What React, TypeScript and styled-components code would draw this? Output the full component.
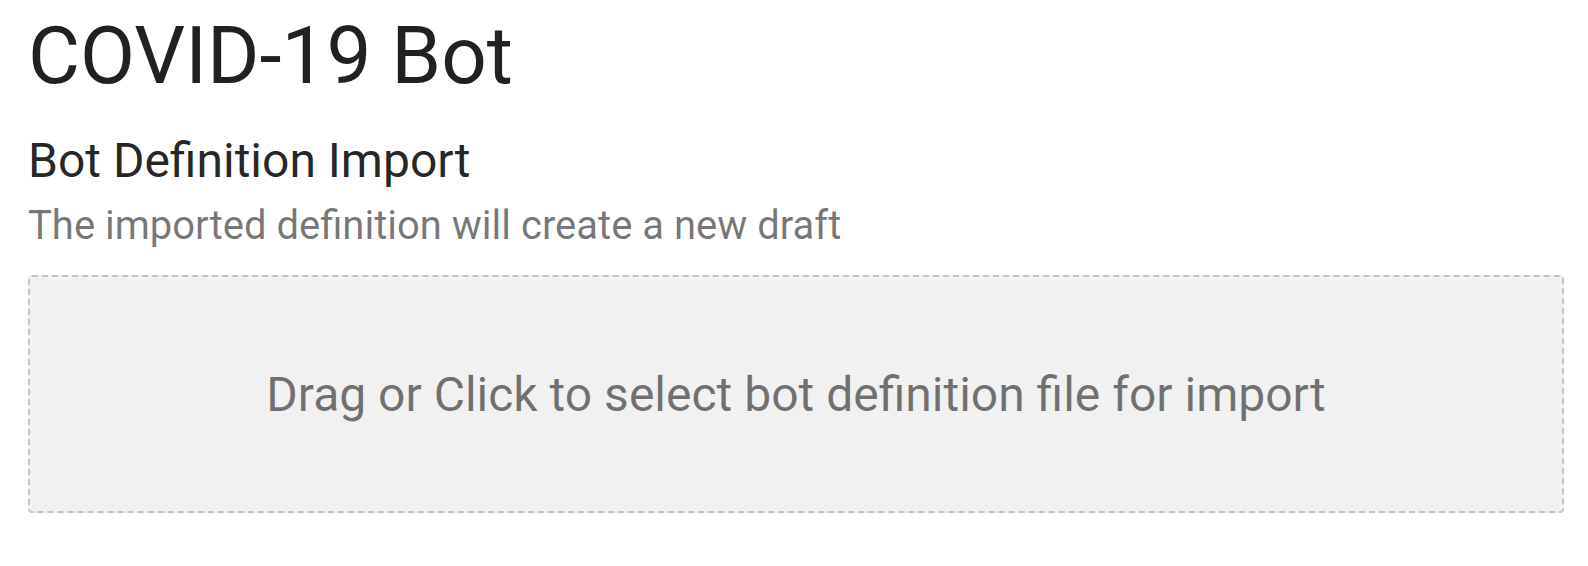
import styled, { createGlobalStyle } from "styled-components";

const GlobalStyle = createGlobalStyle`
  html, body {
    margin: 0;
    padding: 0;
    background: #ffffff;
    font-family: Roboto, "Noto Sans", Arial, sans-serif;
  }
`;

const Page = styled.main`
  padding: 8px 24px 0 28px;
  color: rgba(0, 0, 0, 0.87);
`;

const Title = styled.h1`
  margin: 0;
  font-size: 80px;
  font-weight: 400;
  line-height: 96px;
  letter-spacing: 0;
`;

const Section = styled.section`
  margin-top: 28px;
`;

const Heading = styled.h2`
  margin: 0;
  font-size: 48px;
  font-weight: 400;
  line-height: 58px;
`;

const Hint = styled.p`
  margin: 12px 0 0;
  font-size: 40px;
  line-height: 48px;
  color: rgba(0, 0, 0, 0.54);
`;

const DropZone = styled.div`
  margin-top: 25px;
  height: 238px;
  box-sizing: border-box;
  display: flex;
  align-items: center;
  justify-content: center;
  background: #f1f1f1;
  border: 2px dashed #c4c4c8;
  border-radius: 4px;
  cursor: pointer;

  span {
    font-size: 48px;
    color: rgba(0, 0, 0, 0.54);
  }
`;

export default function App() {
  return (
    <>
      <GlobalStyle />
      <Page>
        <Title>COVID-19 Bot</Title>
        <Section>
          <Heading>Bot Definition Import</Heading>
          <Hint>The imported definition will create a new draft</Hint>
          <DropZone>
            <span>Drag or Click to select bot definition file for import</span>
          </DropZone>
        </Section>
      </Page>
    </>
  );
}
